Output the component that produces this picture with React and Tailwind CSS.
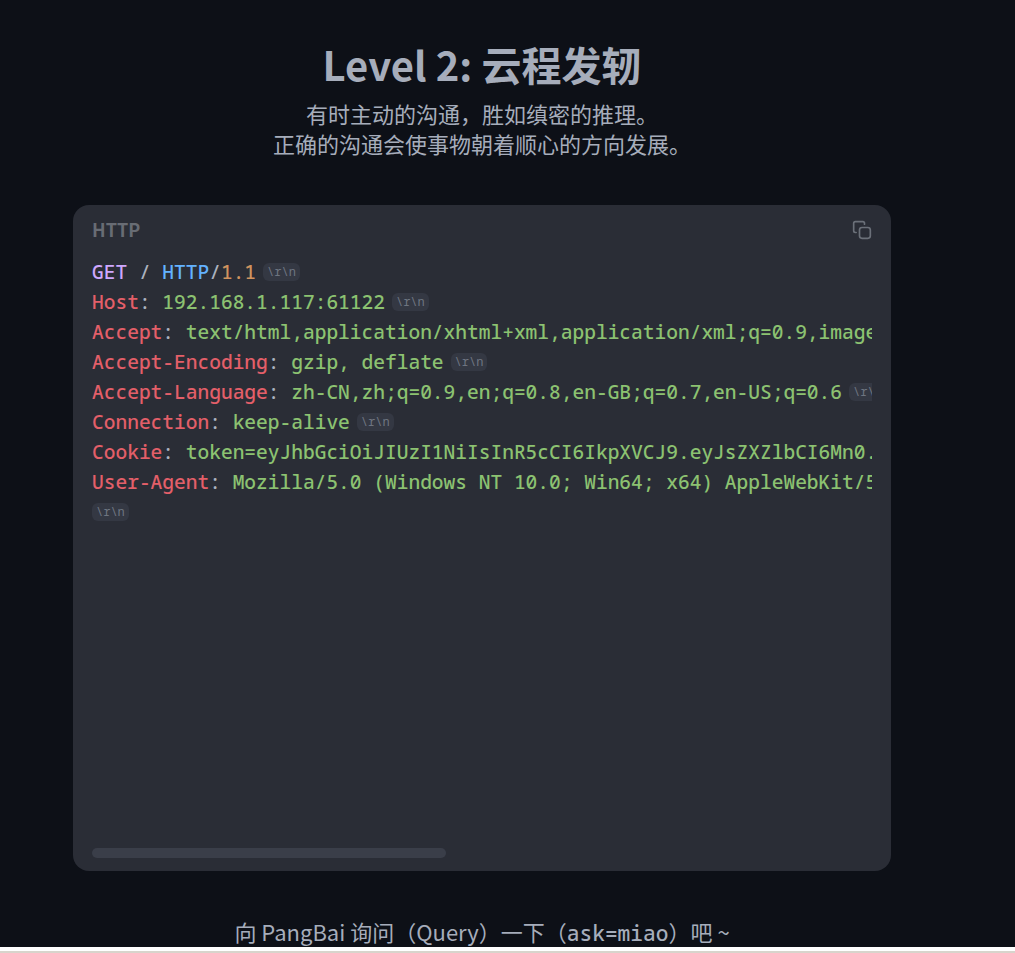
import React from "react";

const mono = "font-['Noto_Sans_Mono','DejaVu_Sans_Mono',monospace]";

function Crlf({ first }) {
  return (
    <span className={`${first ? "" : "ml-[7px]"} inline-block h-[18px] rounded-[6px] bg-[#343843] px-[4px] align-[3px] text-[12px] leading-[18px] font-normal text-[#6e7581]`}>
      \r\n
    </span>
  );
}

function Header({ name, value }) {
  return (
    <div className="h-[30px]">
      <span className="text-[#e35f69]">{name}</span>
      <span className="text-[#abb2bf]">: </span>
      <span className="text-[#8cc271]">{value}</span>
      <Crlf />
    </div>
  );
}

export default function App() {
  return (
    <div className="h-[953px] overflow-hidden bg-[#ffffff]">
      <div className="h-[947px] overflow-hidden bg-[#0d1017] font-['Noto_Sans_CJK_SC','Noto_Sans',sans-serif] text-[#abb2bf]">
        <div className="w-[964px] pt-[36px] text-center">
          <h1 className="text-[40px] leading-[56px] font-semibold text-[#a6adbb]">
            Level 2: 云程发轫
          </h1>
          <p className="mt-[6px] text-[22px] leading-[30px] text-[#a6adbb]">
            有时主动的沟通，胜如缜密的推理。
            <br />
            正确的沟通会使事物朝着顺心的方向发展。
          </p>
        </div>

        <div className="mt-[47px] ml-[73px] flex h-[666px] w-[818px] flex-col rounded-[16px] bg-[#2a2d36] px-[19px] pb-[13px]">
          <div className="flex h-[50px] shrink-0 items-center justify-between">
            <span className="mb-[2px] text-[18px] font-bold text-[#686c74]">HTTP</span>
            <svg
              width="20"
              height="20"
              viewBox="0 0 24 24"
              fill="none"
              stroke="#6b7079"
              strokeWidth="2"
              strokeLinecap="round"
              strokeLinejoin="round"
            >
              <rect x="9" y="9" width="13" height="13" rx="3" />
              <path d="M5 15H4a2 2 0 0 1-2-2V4a2 2 0 0 1 2-2h9a2 2 0 0 1 2 2v1" />
            </svg>
          </div>

          <div className={`${mono} mt-[2px] flex-1 overflow-hidden whitespace-nowrap text-[19.55px] leading-[30px] font-medium`}>
            <div className="h-[30px]">
              <span className="text-[#cfa8ff]">GET</span>
              <span className="text-[#abb2bf]"> / </span>
              <span className="text-[#63b2ff]">HTTP</span>
              <span className="text-[#abb2bf]">/</span>
              <span className="text-[#d0935f]">1.1</span>
              <Crlf />
            </div>
            <Header name="Host" value="192.168.1.117:61122" />
            <Header name="Accept" value="text/html,application/xhtml+xml,application/xml;q=0.9,image/webp,image/apng,*/*;q=0.8" />
            <Header name="Accept-Encoding" value="gzip, deflate" />
            <Header name="Accept-Language" value="zh-CN,zh;q=0.9,en;q=0.8,en-GB;q=0.7,en-US;q=0.6" />
            <Header name="Connection" value="keep-alive" />
            <Header name="Cookie" value="token=eyJhbGciOiJIUzI1NiIsInR5cCI6IkpXVCJ9.eyJsZXZlbCI6Mn0.abcdefghijklmnop" />
            <Header name="User-Agent" value="Mozilla/5.0 (Windows NT 10.0; Win64; x64) AppleWebKit/537.36 (KHTML, like Gecko)" />
            <div className="h-[30px]">
              <Crlf first />
            </div>
          </div>

          <div className="h-[10px] w-[354px] shrink-0 rounded-full bg-[#3a3e49]" />
        </div>

        <p className="mt-[45px] w-[964px] text-center text-[22px] leading-[30px] text-[#a6adbb]">
          向 PangBai 询问（Query）一下（<span className={`${mono} text-[21.2px] font-medium`}>ask=miao</span>）吧 ~
        </p>
      </div>
      <div className="h-[4px] bg-[#ffffff]" />
      <div className="h-[2px] bg-[#d8d4cc]" />
    </div>
  );
}
